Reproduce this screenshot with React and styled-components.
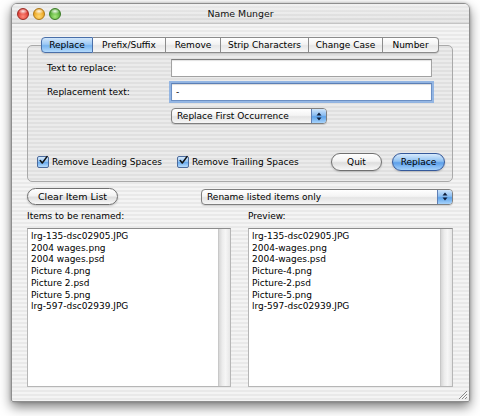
import React from 'react';
import styled, { createGlobalStyle } from 'styled-components';

const GlobalStyle = createGlobalStyle`
  html, body {
    margin: 0;
    padding: 0;
    background: #fff;
  }
  body {
    font-family: 'Lucida Grande', 'DejaVu Sans', Verdana, sans-serif;
    font-size: 9px;
    color: #000;
  }
`;

const Stage = styled.div`
  width: 480px;
  height: 416px;
  padding: 3px 0 0 11px;
  box-sizing: border-box;
`;

const Window = styled.div`
  position: relative;
  width: 459px;
  height: 399px;
  box-sizing: border-box;
  display: flex;
  flex-direction: column;
  overflow: hidden;
  border: 1px solid #8e8e8e;
  border-radius: 6px 6px 2px 2px;
  background: repeating-linear-gradient(
    to bottom,
    #f4f4f4 0,
    #f4f4f4 2px,
    #e9e9e9 2px,
    #e9e9e9 4px
  );
  box-shadow: 0 5px 12px rgba(0, 0, 0, 0.5), 0 0 3px rgba(0, 0, 0, 0.25);
`;

const TitleBar = styled.div`
  height: 19px;
  display: grid;
  grid-template-columns: 1fr auto 1fr;
  align-items: center;
  padding: 0 5px;
  border-bottom: 1px solid #c4c4c4;
  background:
    repeating-linear-gradient(to bottom, rgba(255, 255, 255, 0.35) 0, rgba(255, 255, 255, 0.35) 2px, transparent 2px, transparent 4px),
    linear-gradient(to bottom, #eaeaea, #d9d9d9);
`;

const Lights = styled.div`
  display: flex;
  gap: 4px;
`;

const Light = styled.span`
  width: 12px;
  height: 12px;
  border-radius: 50%;
  box-sizing: border-box;
  border: 1px solid ${(p) => p.edge};
  background:
    radial-gradient(ellipse 5px 3px at 50% 22%, rgba(255, 255, 255, 0.9), rgba(255, 255, 255, 0) 100%),
    radial-gradient(circle at 50% 75%, ${(p) => p.glow} 0, ${(p) => p.base} 70%);
`;

const Title = styled.div`
  font-size: 9.4px;
  color: #111;
  line-height: 12px;
`;

const Content = styled.div`
  flex: 1;
  display: flex;
  flex-direction: column;
  padding: 13px 16px 0 15px;
`;

const TabGroup = styled.div`
  display: flex;
  flex-direction: column;
  align-items: center;
`;

const TabRow = styled.div`
  position: relative;
  z-index: 1;
  display: flex;
  height: 16px;
  margin-bottom: -8px;
  border-radius: 4px;
  box-shadow: 0 1px 1px rgba(0, 0, 0, 0.15);
`;

const Tab = styled.div`
  width: ${(p) => p.w}px;
  height: 16px;
  box-sizing: border-box;
  display: flex;
  align-items: center;
  justify-content: center;
  border: 1px solid ${(p) => (p.active ? '#4a6fa8' : '#8c8c8c')};
  border-left-width: ${(p) => (p.first ? 1 : 0)}px;
  background: ${(p) =>
    p.active
      ? 'linear-gradient(to bottom, #d3e7fb 0%, #9cc8f4 45%, #78b4ef 55%, #b4dafc 100%)'
      : 'linear-gradient(to bottom, #ffffff 0%, #f3f3f3 45%, #e6e6e6 55%, #f7f7f7 100%)'};
  &:first-child {
    border-radius: 4px 0 0 4px;
  }
  &:last-child {
    border-radius: 0 4px 4px 0;
  }
`;

const Panel = styled.div`
  align-self: stretch;
  height: 137px;
  box-sizing: border-box;
  padding: 13px 7px 0 0;
  border: 1px solid #a9a9a9;
  border-radius: 5px;
  background: rgba(0, 0, 0, 0.035);
  display: flex;
  flex-direction: column;
`;

const FormRow = styled.div`
  display: flex;
  align-items: center;
  height: ${(p) => p.h || 18}px;
  margin-top: ${(p) => p.mt || 0}px;
  padding-left: ${(p) => p.pl || 19}px;
`;

const Label = styled.div`
  width: 124px;
`;

const Field = styled.div`
  width: 261px;
  height: 18px;
  box-sizing: border-box;
  background: #fff;
  border: 1px solid ${(p) => (p.focused ? '#6b8fc4' : '#a2a2a2')};
  border-top-color: ${(p) => (p.focused ? '#5b7fb6' : '#7d7d7d')};
  box-shadow: ${(p) =>
    p.focused
      ? '0 0 0 2px rgba(120, 165, 225, 0.75), inset 0 1px 1px rgba(0,0,0,0.15)'
      : 'inset 0 1px 1px rgba(0,0,0,0.12)'};
  padding: 0 4px;
  display: flex;
  align-items: center;
  line-height: 14px;
`;

const Popup = styled.div`
  position: relative;
  width: ${(p) => p.w}px;
  height: 16px;
  box-sizing: border-box;
  display: flex;
  align-items: center;
  padding-left: 5px;
  border: 1px solid #7f7f7f;
  border-radius: 4px;
  background: linear-gradient(to bottom, #ffffff 0%, #f4f4f4 45%, #e4e4e4 55%, #f6f6f6 100%);
  box-shadow: 0 1px 1px rgba(0, 0, 0, 0.15);
  overflow: hidden;
`;

const PopupText = styled.span`
  flex: 1;
  white-space: nowrap;
`;

const PopupArrows = styled.span`
  width: 14px;
  align-self: stretch;
  display: flex;
  align-items: center;
  justify-content: center;
  border-left: 1px solid #5f7fb4;
  background: linear-gradient(to bottom, #cfe5fb 0%, #8bbdf1 45%, #5ea3ea 55%, #a7d3fb 100%);
`;

const CheckRow = styled.div`
  display: flex;
  align-items: center;
  height: 19px;
  margin-top: 28px;
  padding-left: 9px;
`;

const CheckItem = styled.label`
  display: flex;
  align-items: center;
  gap: 3px;
  width: ${(p) => p.w}px;
  white-space: nowrap;
`;

const Box = styled.span`
  width: 12px;
  height: 12px;
  box-sizing: border-box;
  border: 1px solid #4b6a9c;
  border-radius: 2px;
  background: linear-gradient(to bottom, #d6eafc 0%, #93c3f2 45%, #6aabee 55%, #b8dcfc 100%);
  display: flex;
  align-items: center;
  justify-content: center;
  overflow: visible;
`;

const Buttons = styled.div`
  margin-left: auto;
  display: flex;
  gap: 10px;
`;

const Pill = styled.div`
  width: ${(p) => p.w}px;
  height: ${(p) => p.h || 18}px;
  box-sizing: border-box;
  display: flex;
  align-items: center;
  justify-content: center;
  border-radius: 9px;
  border: 1px solid ${(p) => (p.primary ? '#35599a' : '#707070')};
  background: ${(p) =>
    p.primary
      ? 'linear-gradient(to bottom, #d7eafc 0%, #8fc1f2 45%, #5d9fe9 55%, #a5d2fb 100%)'
      : 'linear-gradient(to bottom, #ffffff 0%, #f2f2f2 45%, #dedede 55%, #f8f8f8 100%)'};
  box-shadow: 0 1px 2px rgba(0, 0, 0, 0.2);
  font-size: ${(p) => p.fs || 9}px;
`;

const Toolbar = styled.div`
  display: flex;
  align-items: center;
  justify-content: space-between;
  margin-top: 6px;
  height: 17px;
`;

const Captions = styled.div`
  display: grid;
  grid-template-columns: 221px 1fr;
  margin-top: 5px;
  height: 12px;
  line-height: 12px;
`;

const Lists = styled.div`
  display: grid;
  grid-template-columns: 204px 205px;
  column-gap: 17px;
  margin-top: 6px;
  height: 159px;
`;

const ListBox = styled.div`
  display: flex;
  box-sizing: border-box;
  border: 1px solid #b6b6b6;
  border-top-color: #8c8c8c;
  background: #fff;
`;

const ListBody = styled.div`
  flex: 1;
  padding: 2px 0 0 3px;
  line-height: 11.7px;
  white-space: nowrap;
`;

const ScrollTrack = styled.div`
  width: 11px;
  border-left: 1px solid #c8c8c8;
  background: linear-gradient(to right, #d6d6d6 0%, #ececec 30%, #f6f6f6 60%, #e6e6e6 100%);
`;

const Grip = styled.svg`
  position: absolute;
  right: 1px;
  bottom: 1px;
`;

const tabs = [
  ['Replace', 52],
  ['Prefix/Suffix', 73],
  ['Remove', 55],
  ['Strip Characters', 88],
  ['Change Case', 74],
  ['Number', 56],
];

const items = [
  'lrg-135-dsc02905.JPG',
  '2004 wages.png',
  '2004 wages.psd',
  'Picture 4.png',
  'Picture 2.psd',
  'Picture 5.png',
  'lrg-597-dsc02939.JPG',
];

const Arrows = () => (
  <svg width="6" height="9" viewBox="0 0 6 9">
    <path d="M3 0.5 L5.5 3.5 H0.5 Z" fill="#0d1d3a" />
    <path d="M3 8.5 L5.5 5.5 H0.5 Z" fill="#0d1d3a" />
  </svg>
);

const Check = () => (
  <svg width="11" height="11" viewBox="0 0 11 11" style={{ marginTop: -2, marginLeft: 1 }}>
    <path d="M1.5 5.5 L4 8.5 L9.8 0.8" fill="none" stroke="#111" strokeWidth="1.9" strokeLinecap="round" strokeLinejoin="round" />
  </svg>
);

export default function App() {
  return (
    <Stage>
      <GlobalStyle />
      <Window>
        <TitleBar>
          <Lights>
            <Light base="#d9352c" glow="#ff8a7a" edge="#9a2a22" />
            <Light base="#e9a01a" glow="#ffd770" edge="#a97416" />
            <Light base="#4ea530" glow="#a6e87c" edge="#3a7a24" />
          </Lights>
          <Title>Name Munger</Title>
          <div />
        </TitleBar>

        <Content>
          <TabGroup>
            <TabRow>
              {tabs.map(([name, w], i) => (
                <Tab key={name} w={w} first={i === 0} active={i === 0}>
                  {name}
                </Tab>
              ))}
            </TabRow>
            <Panel>
              <FormRow>
                <Label>Text to replace:</Label>
                <Field />
              </FormRow>
              <FormRow mt={6}>
                <Label>Replacement text:</Label>
                <Field focused>-</Field>
              </FormRow>
              <FormRow mt={7} h={16} pl={143}>
                <Popup w={156}>
                  <PopupText>Replace First Occurrence</PopupText>
                  <PopupArrows>
                    <Arrows />
                  </PopupArrows>
                </Popup>
              </FormRow>
              <CheckRow>
                <CheckItem w={140}>
                  <Box>
                    <Check />
                  </Box>
                  Remove Leading Spaces
                </CheckItem>
                <CheckItem w={140}>
                  <Box>
                    <Check />
                  </Box>
                  Remove Trailing Spaces
                </CheckItem>
                <Buttons>
                  <Pill w={51}>Quit</Pill>
                  <Pill w={53} primary>
                    Replace
                  </Pill>
                </Buttons>
              </CheckRow>
            </Panel>
          </TabGroup>

          <Toolbar>
            <Pill w={91} h={17} fs={9.5}>
              Clear Item List
            </Pill>
            <Popup w={252}>
              <PopupText>Rename listed items only</PopupText>
              <PopupArrows>
                <Arrows />
              </PopupArrows>
            </Popup>
          </Toolbar>

          <Captions>
            <div>Items to be renamed:</div>
            <div>Preview:</div>
          </Captions>

          <Lists>
            <ListBox>
              <ListBody>
                {items.map((t) => (
                  <div key={t}>{t}</div>
                ))}
              </ListBody>
              <ScrollTrack />
            </ListBox>
            <ListBox>
              <ListBody>
                {items.map((t) => (
                  <div key={t}>{t.replace(/ /g, '-')}</div>
                ))}
              </ListBody>
              <ScrollTrack />
            </ListBox>
          </Lists>
        </Content>

        <Grip width="11" height="11" viewBox="0 0 11 11">
          <path d="M10 2 L2 10 M10 5 L5 10 M10 8 L8 10" stroke="#8a8a8a" strokeWidth="1" />
          <path d="M10.8 2.8 L2.8 10.8 M10.8 5.8 L5.8 10.8" stroke="#fff" strokeWidth="0.8" />
        </Grip>
      </Window>
    </Stage>
  );
}
